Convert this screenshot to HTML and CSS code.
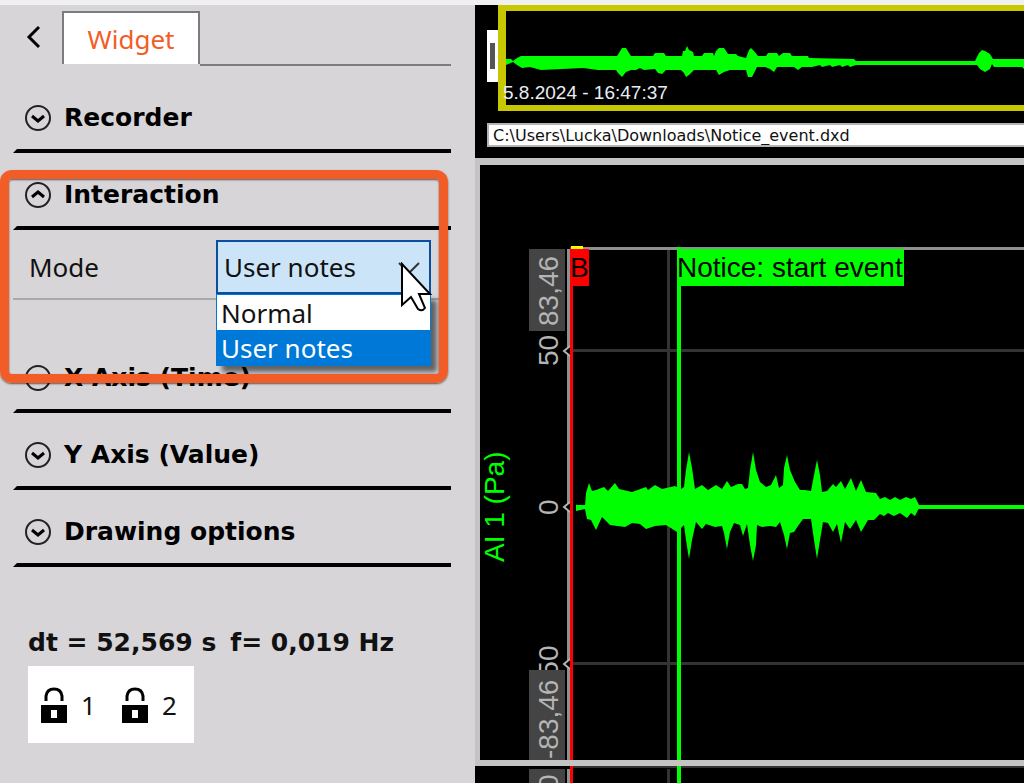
FILE: index.html
```html
<!DOCTYPE html>
<html lang="en">
<head>
    <meta charset="UTF-8">
    <meta name="viewport" content="width=device-width, initial-scale=1.0">
    <title>Recorder</title>
    <link rel="stylesheet" href="styles.css">
</head>
<body>
    <div class="topbar"></div>
    <div id="wrapper">
        <aside class="sidebar">
            <nav class="tabs">
                <button class="back" aria-label="Back">
                    <svg width="16" height="24" viewBox="0 0 16 24"><path d="M13 2 L3 12 L13 22"/></svg>
                </button>
                <button class="tab">Widget</button>
            </nav>

            <section class="section">
                <button class="section-title">
                    <svg class="icon" viewBox="0 0 26 26"><circle cx="13" cy="13" r="12"/><path d="M7 11 L13 16 L19 11"/></svg>
                    Recorder
                </button>
            </section>

            <section class="section interaction">
                <button class="section-title">
                    <svg class="icon" viewBox="0 0 26 26"><circle cx="13" cy="13" r="12"/><path d="M7 15 L13 10 L19 15"/></svg>
                    Interaction
                </button>
                <div class="field">
                    <label for="mode">Mode</label>
                    <div class="dropdown">
                        <select id="mode">
                            <option>Normal</option>
                            <option selected>User notes</option>
                        </select>
                        <svg class="arrow" width="22" height="12" viewBox="0 0 22 12"><path d="M1 1 L11 11 L21 1"/></svg>
                        <ul class="options">
                            <li>Normal</li>
                            <li class="selected">User notes</li>
                        </ul>
                        <svg class="cursor" width="32" height="52" viewBox="0 0 32 52"><path d="M2 2 V43 L11 35 L18 47 Q22 50 25 46 L19 32 H30 Z"/></svg>
                    </div>
                </div>
                <div class="highlight"></div>
            </section>

            <section class="section">
                <button class="section-title">
                    <svg class="icon" viewBox="0 0 26 26"><circle cx="13" cy="13" r="12"/><path d="M7 11 L13 16 L19 11"/></svg>
                    X Axis (Time)
                </button>
            </section>
            <section class="section">
                <button class="section-title">
                    <svg class="icon" viewBox="0 0 26 26"><circle cx="13" cy="13" r="12"/><path d="M7 11 L13 16 L19 11"/></svg>
                    Y Axis (Value)
                </button>
            </section>
            <section class="section">
                <button class="section-title">
                    <svg class="icon" viewBox="0 0 26 26"><circle cx="13" cy="13" r="12"/><path d="M7 11 L13 16 L19 11"/></svg>
                    Drawing options
                </button>
            </section>

            <p class="delta"><span>dt = 52,569 s</span><span>f= 0,019 Hz</span></p>
            <div class="locks">
                <button class="lock">
                    <svg width="26" height="36" viewBox="0 0 26 36"><path class="shackle" d="M5 14 V9 Q6 2 13 2 Q20 2 21 9 V14"/><path d="M0 18 H26 V36 H0 Z M10 23 V31 H16 V23 Z" fill-rule="evenodd"/></svg>
                    1
                </button>
                <button class="lock">
                    <svg width="26" height="36" viewBox="0 0 26 36"><path class="shackle" d="M5 14 V9 Q6 2 13 2 Q20 2 21 9 V14"/><path d="M0 18 H26 V36 H0 Z M10 23 V31 H16 V23 Z" fill-rule="evenodd"/></svg>
                    2
                </button>
            </div>
        </aside>

        <main class="display">
            <div class="overview">
                <div class="range">
                    <div class="handle"></div>
                    <div class="frame">
                        <svg class="preview">
                            <g transform="translate(-506 -11)">
                                <polygon points="506,59 511,59 513,61 517,58 521,56 617,56 619,53 622,48 626,48 629,53 631,56 653,56 655,53 664,53 666,56 682,56 683,51 685,51 687,46 689,50 693,52 694,56 702,56 704,53 713,53 714,56 716,51 719,48 724,48 728,54 736,54 738,56 746,58 749,50 751,48 754,51 758,56 766,56 768,53 777,53 779,56 783,53 790,53 792,56 808,56 809,58 854,59 856,61 975,61 979,53 982,50 985,51 990,54 993,59 1024,59 1024,69 1022,67 994,67 992,64 990,69 985,72 980,69 977,65 975,65 856,65 850,67 848,65 842,67 840,65 832,67 830,65 822,67 820,65 812,67 802,67 798,70 794,67 786,67 777,67 774,72 770,69 765,67 757,67 752,77 748,77 746,70 730,70 724,72 719,75 716,70 694,70 689,75 686,77 684,73 681,70 666,70 662,74 658,73 655,69 644,70 640,68 636,70 631,70 626,72 622,77 618,73 616,70 598,70 583,68 541,70 530,67 522,68 517,65 513,62 506,65"/>
                            </g>
                        </svg>
                    </div>
                    <time class="stamp" datetime="2024-08-05T16:47:37">5.8.2024 - 16:47:37</time>
                </div>
                <input class="path" type="text" aria-label="File" value="C:\Users\Lucka\Downloads\Notice_event.dxd" readonly>
            </div>

            <div class="plot">
                <svg class="graph">
                    <!-- grid -->
                    <rect class="grid" x="187" y="84" width="3" height="100%"/>
                    <rect class="grid" x="92" y="184" width="100%" height="3"/>
                    <rect class="grid" x="92" y="497" width="100%" height="3"/>
                    <rect class="axis" x="92" y="82" width="100%" height="3"/>
                    <rect class="axis" x="87" y="84" width="4" height="100%"/>
                    <rect class="signal" x="96" y="340" width="100%" height="4"/>

                    <!-- AI 1 -->
                    <g class="signal" transform="translate(-480 -165)">
                        <polygon points="576,504 578,507 585,506 586,493 589,483 592,491 596,490 604,487 608,491 615,483 619,489 632,492 646,487 648,490 655,485 662,489 675,486 681,489 684,487 686,470 689,452 692,468 695,489 702,485 708,490 716,485 722,489 727,481 731,487 738,484 742,484 745,489 748,488 750,470 753,452 756,470 760,482 766,487 771,485 776,475 779,488 783,485 784,468 787,455 790,470 795,482 800,490 805,490 811,491 814,475 817,460 820,475 822,492 827,491 833,484 836,487 841,481 845,489 851,478 856,491 861,480 866,492 876,493 880,499 885,497 890,500 895,497 900,500 906,497 911,499 915,497 919,505 919,508 915,516 911,513 907,518 900,513 894,516 888,513 884,516 880,514 874,520 868,520 861,532 856,520 850,529 845,522 841,543 837,524 833,532 828,523 823,522 820,540 817,559 814,540 811,519 803,519 798,526 794,532 790,533 787,549 784,535 780,522 776,527 770,526 762,527 757,525 756,545 753,561 750,545 747,524 743,536 740,525 734,523 730,532 727,549 724,533 722,526 715,527 706,524 702,529 696,522 692,540 689,559 686,540 684,525 677,532 666,525 655,526 646,529 640,524 632,523 625,527 610,525 602,517 596,530 591,520 587,519 585,509 576,511"/>
                    </g>

                    <!-- scale -->
                    <g class="scale">
                        <text transform="translate(78 201) rotate(-90)">50</text>
                        <text transform="translate(78 350) rotate(-90)">0</text>
                        <text transform="translate(78 521) rotate(-90)">-50</text>
                        <rect x="49" y="84" width="36" height="82"/>
                        <text transform="translate(78 161) rotate(-90)">83,46</text>
                        <rect x="49" y="505" width="36" height="90"/>
                        <text transform="translate(78 594) rotate(-90)">-83,46</text>
                        <path d="M90 181 L84 186 L90 191 M90 337 L84 342 L90 347 M90 494 L84 499 L90 504"/>
                    </g>
                    <text class="channel" transform="translate(24 397) rotate(-90)">AI 1 (Pa)</text>

                    <!-- markers -->
                    <rect class="cursor-b" x="90" y="82" width="3" height="100%"/>
                    <rect class="cursor-b" x="91" y="84" width="18" height="37"/>
                    <rect class="cursor-top" x="91" y="81" width="12" height="3"/>
                    <text x="90" y="112">B</text>
                    <rect class="signal" x="197" y="82" width="4" height="100%"/>
                    <rect class="signal" x="198" y="84" width="226" height="37"/>
                    <text x="197" y="112">Notice: start event</text>
                </svg>
            </div>

            <div class="plot next">
                <svg class="graph">
                    <rect class="grid" x="97" y="0" width="100%" height="2"/>
                    <rect class="grid" x="192" y="3" width="3" height="100%"/>
                    <rect class="axis" x="92" y="3" width="4" height="100%"/>
                    <g class="scale">
                        <rect x="54" y="3" width="36" height="82"/>
                        <text transform="translate(83 24) rotate(-90)">0</text>
                    </g>
                    <rect class="cursor-b" x="95" y="0" width="3" height="100%"/>
                    <rect class="signal" x="202" y="0" width="4" height="100%"/>
                </svg>
            </div>
        </main>
    </div>
</body>
</html>
```
FILE: styles.css
```css
*{
    margin: 0;
    padding: 0;
    box-sizing: border-box;
}
body{
    height: 100vh;
    display: flex;
    flex-direction: column;
    overflow: hidden;
    font-family: "Noto Sans", Tahoma, sans-serif;
    font-size: 26px;
    color: #111;
    background-color: #d7d5d8;
}
button, select, input{
    font: inherit;
    color: inherit;
    border: none;
    background: none;
}
svg{
    display: block;
}
.topbar{
    flex: none;
    height: 5px;
    background-color: #f0f0f0;
}
#wrapper{
    flex: 1;
    min-height: 0;
    display: flex;
}

/* sidebar */
.sidebar{
    flex: none;
    width: 475px;
    padding: 6px 24px 0 13px;
}
.tabs{
    display: flex;
    align-items: flex-start;
    height: 65px;
}
.tabs::after{
    content: "";
    flex: 1;
    height: 53px;
    border-bottom: 2px solid #7c7b7d;
}
.back{
    width: 49px;
    height: 52px;
    padding-left: 13px;
}
.back path{
    fill: none;
    stroke: #000;
    stroke-width: 3;
}
.tab{
    width: 138px;
    height: 53px;
    color: #f25d27;
    background-color: #fff;
    border: 2px solid #7c7b7d;
    border-bottom: none;
}
.section-title{
    position: relative;
    width: 100%;
    height: 77px;
    padding: 6px 12px 0;
    display: flex;
    align-items: center;
    gap: 13px;
    font-family: "DejaVu Sans", sans-serif;
    font-size: 25px;
    font-weight: bold;
    color: #000;
}
.section-title::after{
    content: "";
    position: absolute;
    left: 0;
    right: 0;
    bottom: 0;
    height: 4px;
    background-color: #000;
    clip-path: polygon(4px 0, 100% 0, 100% 100%, 0 100%);
}
.icon{
    width: 26px;
    height: 26px;
    fill: none;
    stroke: #222;
    stroke-width: 2;
}
.icon path{
    stroke: #000;
    stroke-width: 3;
}
.interaction{
    position: relative;
    z-index: 1;
    margin-bottom: 36px;
}
.field{
    display: flex;
    justify-content: space-between;
    align-items: center;
    height: 70px;
    margin-right: 11px;
    padding: 6px 9px 0 16px;
    border-bottom: 2px solid #a9a8aa;
}
.dropdown{
    position: relative;
    width: 215px;
}
.dropdown select{
    display: block;
    width: 100%;
    height: 54px;
    padding-left: 6px;
    appearance: none;
    background-color: #cce4f7;
    border: 2px solid #0a4ea2;
}
.arrow{
    position: absolute;
    right: 11px;
    top: 22px;
    fill: none;
    stroke: #333;
    stroke-width: 2;
}
.options{
    position: absolute;
    top: 100%;
    left: 0;
    width: 100%;
    list-style: none;
    background-color: #fff;
    border: 1px solid #0078d7;
    box-shadow: 6px 6px 5px rgba(0, 0, 0, 0.55);
}
.options li{
    height: 35px;
    padding-left: 4px;
    line-height: 36px;
}
.options .selected{
    color: #fff;
    background-color: #0078d7;
}
.cursor{
    position: absolute;
    top: 22px;
    right: -1px;
    z-index: 1;
    fill: #fff;
    stroke: #000;
    stroke-width: 2;
}
.highlight{
    position: absolute;
    top: 17px;
    left: -13px;
    right: 3px;
    height: 213px;
    border: 9px solid #f25d27;
    border-radius: 12px;
    box-shadow: 0 1px 2px rgba(0, 0, 0, 0.6), inset 0 1px 2px rgba(0, 0, 0, 0.6);
    pointer-events: none;
}
.delta{
    display: flex;
    gap: 14px;
    margin-top: 60px;
    padding-left: 15px;
    font-family: "DejaVu Sans", sans-serif;
    font-size: 25px;
    line-height: 32px;
    font-weight: bold;
}
.locks{
    display: flex;
    gap: 26px;
    width: fit-content;
    margin: 7px 0 0 15px;
    padding: 0 17px 0 13px;
    background-color: #fff;
}
.lock{
    display: flex;
    align-items: center;
    gap: 14px;
    height: 77px;
}
.shackle{
    fill: none;
    stroke: #000;
    stroke-width: 3;
}

/* recorder */
.display{
    flex: 1;
    min-width: 0;
    display: flex;
    flex-direction: column;
    background-color: #c4c4c4;
    font-family: "Liberation Sans", Arial, sans-serif;
}
.overview{
    flex: none;
    height: 153px;
    padding-left: 12px;
    background-color: #000;
}
.range{
    position: relative;
    display: flex;
    height: 106px;
}
.handle{
    width: 11px;
    height: 52px;
    margin-top: 25px;
    padding: 13px 3px;
    background-color: #fff;
}
.handle::after{
    content: "";
    display: block;
    height: 100%;
    background-color: #555;
}
.frame{
    flex: 1;
    min-width: 0;
    border: 6px solid #c8c800;
    border-left-width: 8px;
    border-right: none;
}
.preview{
    width: 100%;
    height: 100%;
    fill: #0f0;
}
.stamp{
    position: absolute;
    left: 16px;
    bottom: 7px;
    font-size: 19px;
    line-height: 22px;
    color: #e8eef4;
}
.path{
    display: block;
    width: 100%;
    height: 24px;
    margin-top: 12px;
    padding-left: 4px;
    font-family: "DejaVu Sans", sans-serif;
    font-size: 16px;
    background-color: #fff;
    border: 2px solid #b4b4b4;
    border-right: none;
}
.plot{
    flex: none;
    height: 595px;
    margin: 7px 0 0 5px;
    background-color: #000;
}
.next{
    flex: 1;
    min-height: 0;
    height: auto;
    margin: 6px 0 0;
}
.graph{
    width: 100%;
    height: 100%;
    font-size: 28px;
}
.grid{
    fill: #333;
}
.axis{
    fill: #909090;
}
.signal{
    fill: #0f0;
}
.scale rect{
    fill: #444;
}
.scale text{
    fill: #b4b4b4;
}
.scale path{
    fill: #000;
    stroke: #b4b4b4;
    stroke-width: 2;
}
.channel{
    fill: #0f0;
}
.cursor-b{
    fill: #f00;
}
.cursor-top{
    fill: #ff0;
}
```
